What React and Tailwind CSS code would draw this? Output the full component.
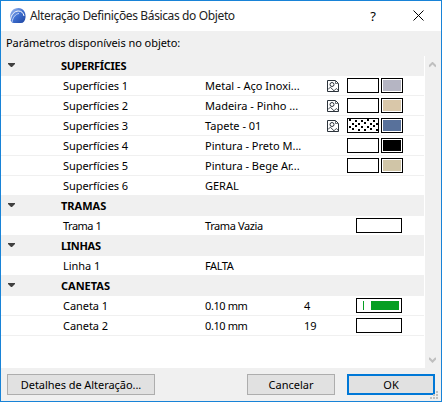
const sections = [
  {
    title: 'SUPERFÍCIES',
    tracking: 'tracking-[-0.3px]',
    rows: [
      { name: 'Superfícies 1', value: 'Metal - Aço Inoxi...', texture: true, color: 'bg-[#b5b5c3]' },
      { name: 'Superfícies 2', value: 'Madeira - Pinho ...', texture: true, color: 'bg-[#d9c7a9]' },
      { name: 'Superfícies 3', value: 'Tapete - 01', texture: true, dots: true, color: 'bg-[#58719b]' },
      { name: 'Superfícies 4', value: 'Pintura - Preto M...', color: 'bg-black' },
      { name: 'Superfícies 5', value: 'Pintura - Bege Ar...', color: 'bg-[#d0c5a7]' },
      { name: 'Superfícies 6', value: 'GERAL' },
    ],
  },
  {
    title: 'TRAMAS',
    tracking: 'tracking-[0px]',
    rows: [{ name: 'Trama 1', value: 'Trama Vazia', wide: true, tight: true, tightName: true }],
  },
  {
    title: 'LINHAS',
    tracking: 'tracking-[-0.3px]',
    rows: [{ name: 'Linha 1', value: 'FALTA', tight: true }],
  },
  {
    title: 'CANETAS',
    tracking: 'tracking-[0px]',
    rows: [
      { name: 'Caneta 1', value: '0.10 mm', pen: '4', wide: true, green: true, tight: true },
      { name: 'Caneta 2', value: '0.10 mm', pen: '19', wide: true, tight: true },
    ],
  },
]

function Logo() {
  return (
    <svg className="ml-2 shrink-0" width="18" height="18" viewBox="0 0 18 18">
      <defs>
        <linearGradient id="logo" x1="0" y1="0" x2="1" y2="1">
          <stop offset="0" stopColor="#a9c4f5" />
          <stop offset="0.5" stopColor="#3f6fd0" />
          <stop offset="1" stopColor="#1c439f" />
        </linearGradient>
      </defs>
      <path d="M2.500 15C-.3 10 1 1 9.500 1c5 0 7.500 4.500 7 9.500-.3 3.500-2 5.500-4.500 5.500H5c-1 0-1.800-.3-2.500-1z" fill="url(#logo)" />
      <path d="M1.500 13C2 7.500 5.500 4 9.500 4c3 0 4.800 1.800 5.500 5" fill="none" stroke="#fff" strokeWidth="1" />
      <path d="M3 15C4 10 6.500 7 10 6.500" fill="none" stroke="#c3d5f8" strokeWidth="1" />
    </svg>
  )
}

function TextureIcon() {
  return (
    <svg className="mr-2 shrink-0" width="12" height="12" viewBox="0 0 12 12" fill="none" stroke="#2b333b">
      <path d="M.5 11.500V.5h8l3 3v8z" />
      <path d="M8.500 1v2.500H11" strokeWidth="0.700" />
      <circle cx="5" cy="4.500" r="2" />
      <path d="M1 9.500l2.300-2.300 3.700 3.600 2.300-2.300 2.200 2.200" strokeWidth="0.900" />
    </svg>
  )
}

function Dots() {
  const rows = [0, 3, 6, 9]
  const cols = [0, 1, 2, 3, 4]
  return (
    <svg className="block" width="30" height="13" viewBox="0 0 30 13" shapeRendering="crispEdges">
      {rows.map((y, r) =>
        cols.map((c) => (
          <rect key={`${r}-${c}`} x={c * 6 + (r % 2 ? 4 : 1)} y={y + 1 + ((c + r) % 3 === 0 ? -1 : 0)} width="2" height="2" />
        ))
      )}
    </svg>
  )
}

function Preview({ row }) {
  if (row.wide) {
    return (
      <div className="mr-[22px] flex h-[15px] w-[46px] items-center border border-black bg-white">
        {row.green && (
          <>
            <div className="ml-1.5 h-[9px] w-px bg-[#069e22]" />
            <div className="ml-[7px] h-[9px] w-7 bg-[#069e22]" />
          </>
        )}
      </div>
    )
  }
  if (!row.color) return null
  return (
    <div className="mr-[21px] flex items-center">
      {row.texture && <TextureIcon />}
      <div className="h-[15px] w-8 border border-black bg-white">{row.dots && <Dots />}</div>
      <div className="ml-0.5 h-[15px] w-[22px] border border-black bg-white p-px">
        <div className={`h-full w-full ${row.color}`} />
      </div>
    </div>
  )
}

function Section({ section }) {
  return (
    <>
      <div className="-mt-px flex h-[21px] items-center bg-[#f0f0f0] pl-[7px] pt-px">
        <svg className="mb-0.5" width="7" height="4" viewBox="0 0 7 4">
          <path d="M0 0h7v1L4 4H3L0 1z" fill="#404040" />
        </svg>
        <span className={`ml-[46px] font-bold ${section.tracking}`}>{section.title}</span>
      </div>
      {section.rows.map((row) => (
        <div key={row.name} className="flex h-5 items-center border-b border-[#f0f0f0] pl-[62px]">
          <span className={`w-[142px] ${row.tightName ? 'tracking-[-0.5px]' : 'tracking-[-0.05px]'}`}>{row.name}</span>
          <span className={`w-[99px] whitespace-nowrap ${row.tight ? 'tracking-[-0.4px]' : 'tracking-[0px]'}`}>{row.value}</span>
          <span>{row.pen}</span>
          <div className="ml-auto">
            <Preview row={row} />
          </div>
        </div>
      ))}
    </>
  )
}

export default function App() {
  return (
    <div className="relative flex h-[402px] w-[442px] flex-col border border-[#1883d7] bg-[#f0f0f0] font-['Noto_Sans','Open_Sans',sans-serif] text-[11px] leading-[16px] text-black">
      <div className="flex h-[30px] shrink-0 items-center bg-white">
        <Logo />
        <span className="ml-[3px] text-[12px] tracking-[-0.37px] text-[#222]">Alteração Definições Básicas do Objeto</span>
        <span className="ml-auto mr-[37px] text-[13px]">?</span>
        <svg className="mb-px mr-[17px]" width="11" height="11" viewBox="0 0 11 11" stroke="#000" fill="none">
          <path d="M.5.5l10 10M10.500.5l-10 10" />
        </svg>
      </div>
      <div className="h-[25px] shrink-0 pl-[5px] pt-1 tracking-[-0.05px]">Parâmetros disponíveis no objeto:</div>
      <div className="flex h-[312px] shrink-0">
        <div className="w-[424px] bg-white">
          <div className="w-[423px]">
            {sections.map((section) => (
              <Section key={section.title} section={section} />
            ))}
          </div>
        </div>
        <div className="flex w-4 flex-col items-center justify-between py-1.5 pr-px">
          <svg width="7" height="6" viewBox="0 0 7 6" fill="none" stroke="#bfbfbf" strokeWidth="2">
            <path d="M0 4.500L3.500 1 7 4.500" />
          </svg>
          <svg className="mb-[-1px]" width="7" height="6" viewBox="0 0 7 6" fill="none" stroke="#bfbfbf" strokeWidth="2">
            <path d="M0 1L3.500 4.500 7 1" />
          </svg>
        </div>
      </div>
      <div className="flex pl-1.5 pt-1.5">
        <button className="h-[21px] w-[148px] border border-[#adadad] bg-[#e1e1e1] tracking-[-0.05px]">Detalhes de Alteração...</button>
        <button className="ml-[92px] h-[21px] w-[88px] border border-[#adadad] bg-[#e1e1e1]">Cancelar</button>
        <button className="ml-3 h-[21px] w-[88px] border-2 border-[#0078d7] bg-[#e1e1e1]">OK</button>
      </div>
      <svg className="absolute bottom-[2px] right-[3px]" width="8" height="8" viewBox="0 0 8 8" fill="#bfbfbf">
        <path d="M6 0h2v2H6zM3 3h2v2H3zM6 3h2v2H6zM0 6h2v2H0zM3 6h2v2H3zM6 6h2v2H6z" />
      </svg>
    </div>
  )
}
